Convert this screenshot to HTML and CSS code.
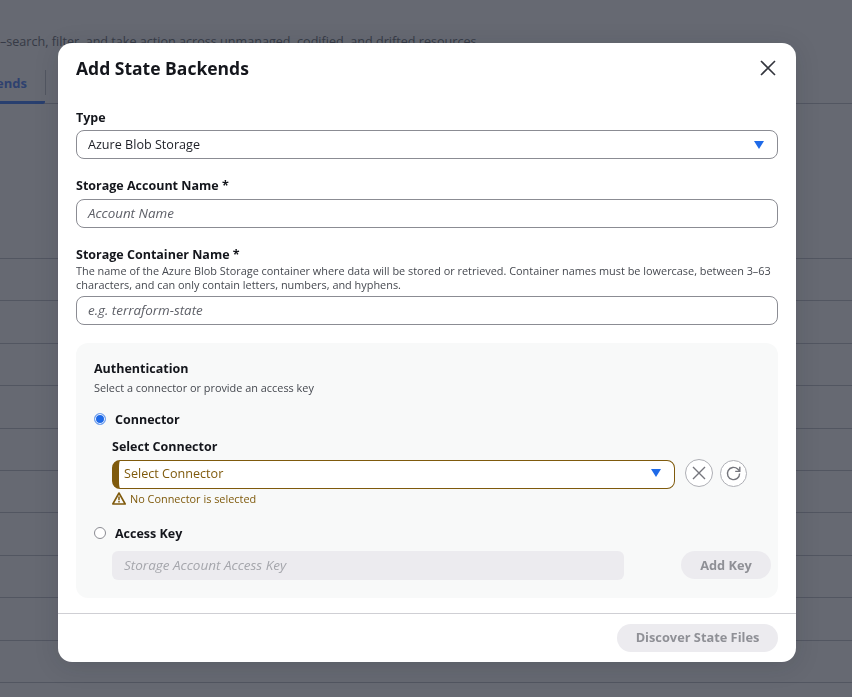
FILE: index.html
```html
<!DOCTYPE html>
<html lang="en">
<head>
    <meta charset="UTF-8">
    <title>Add State Backends</title>
    <link rel="stylesheet" href="styles.css">
</head>
<body>
    <!-- Page behind the dialog -->
    <div class="page">
        <p class="page-intro">–search, filter, and take action across unmanaged, codified, and drifted resources.</p>
        <div class="tabs">
            <span class="tab">ends</span>
            <span class="tab-sep"></span>
        </div>
        <div class="rows">
            <div class="row first"></div>
            <div class="row"></div>
            <div class="row"></div>
            <div class="row"></div>
            <div class="row"></div>
            <div class="row"></div>
            <div class="row"></div>
            <div class="row"></div>
            <div class="row"></div>
            <div class="row"></div>
            <div class="row"></div>
        </div>
    </div>

    <div class="overlay"></div>

    <div class="modal">
        <div class="modal-head">
            <h1>Add State Backends</h1>
            <svg class="close" width="16" height="16" viewBox="0 0 16 16"><path d="M1 1l14 14M15 1L1 15" stroke="#33353d" stroke-width="1.6" fill="none"/></svg>
        </div>

        <div class="modal-body">
            <div class="field">
                <label>Type</label>
                <div class="input select">
                    <span>Azure Blob Storage</span>
                    <span class="caret"></span>
                </div>
            </div>

            <div class="field account">
                <label>Storage Account Name *</label>
                <div class="input placeholder">Account Name</div>
            </div>

            <div class="field">
                <label>Storage Container Name *</label>
                <p class="help">The name of the Azure Blob Storage container where data will be stored or retrieved. Container names must be lowercase, between 3–63 characters, and can only contain letters, numbers, and hyphens.</p>
                <div class="input placeholder">e.g. terraform-state</div>
            </div>

            <!-- Authentication block -->
            <div class="auth">
                <h2>Authentication</h2>
                <p class="auth-sub">Select a connector or provide an access key</p>

                <div class="radio-row">
                    <span class="radio checked"></span>
                    <span class="radio-label">Connector</span>
                </div>
                <div class="indent">
                    <label class="connector-label">Select Connector</label>
                    <div class="connector-row">
                        <div class="input select warn">
                            <span>Select Connector</span>
                            <span class="caret"></span>
                        </div>
                        <span class="round-btn">
                            <svg width="16" height="16" viewBox="0 0 16 16"><path d="M2 2l12 12M14 2L2 14" stroke="#74757c" stroke-width="1.4" fill="none"/></svg>
                        </span>
                        <span class="round-btn refresh">
                            <svg width="17" height="17" viewBox="0 0 17 17"><path d="M14.6 8.5a6.1 6.1 0 1 1-1.9-4.4L14.6 6" stroke="#74757c" stroke-width="1.4" fill="none"/><path d="M14.8 1.8V6.4H10.2" stroke="#74757c" stroke-width="1.4" fill="none"/></svg>
                        </span>
                    </div>
                    <div class="warn-text">
                        <svg width="14" height="13" viewBox="0 0 14 13"><path d="M7 1L13.2 12H.8z" stroke="#7f5a0c" stroke-width="1.6" stroke-linejoin="round" fill="none"/><path d="M7 4.6v3.6M7 9v1.4" stroke="#7f5a0c" stroke-width="1.5" fill="none"/></svg>
                        <span>No Connector is selected</span>
                    </div>
                </div>

                <div class="radio-row second">
                    <span class="radio"></span>
                    <span class="radio-label">Access Key</span>
                </div>
                <div class="indent key-row">
                    <div class="input disabled">Storage Account Access Key</div>
                    <button class="btn add-key">Add Key</button>
                </div>
            </div>
        </div>

        <div class="modal-foot">
            <button class="btn discover">Discover State Files</button>
        </div>
    </div>
</body>
</html>
```

FILE: styles.css
```css
/* Page behind the dialog */
* {
    box-sizing: border-box;
}
html, body {
    height: 100%;
}
body {
    margin: 0;
    font-family: "Open Sans", "Noto Sans", sans-serif;
    color: #14161c;
    background: #fff;
    overflow: hidden;
}
.page-intro {
    margin: 0;
    padding-top: 33px;
    height: 62px;
    font-size: 12.6px;
    line-height: 18px;
    white-space: nowrap;
    color: #777a80;
}
.tabs {
    display: flex;
    align-items: center;
    height: 42px;
    border-bottom: 1px solid #c6c8cf;
}
.tab {
    display: flex;
    justify-content: flex-end;
    font-size: 13px;
    font-weight: 700;
    color: #5f8df5;
    width: 45px;
    height: 42px;
    padding-right: 18px;
    line-height: 42px;
    border-bottom: 3px solid #4f86f5;
    border-radius: 0 0 2px 0;
    white-space: nowrap;
}
.tab-sep {
    width: 1px;
    height: 25px;
    background: #c6c8cf;
}
.rows {
    padding-top: 154px;
}
.row {
    height: 42.4px;
    border-bottom: 1px solid #c6c8cf;
}
.row.first {
    height: 1px;
}

.overlay {
    position: fixed;
    inset: 0;
    background: rgba(20, 24, 38, 0.65);
}

/* Dialog */
.modal {
    position: fixed;
    left: 58px;
    top: 43px;
    width: 738px;
    height: 619px;
    display: flex;
    flex-direction: column;
    background: #fff;
    border-radius: 14px;
    box-shadow: 0 4px 24px rgba(20, 24, 35, 0.15);
}
.modal-head {
    display: flex;
    align-items: center;
    justify-content: space-between;
    height: 50px;
    padding: 0 20px 1px 18px;
}
.modal-head h1 {
    margin: 0;
    font-size: 17.5px;
    line-height: 24px;
    font-weight: 700;
}
.modal-body {
    flex: 1;
    padding: 16px 18px 0;
    border-bottom: 1px solid #cfcfd4;
}
.field {
    margin-bottom: 18px;
}
label {
    display: block;
    font-size: 12.5px;
    line-height: 17px;
    font-weight: 700;
    margin-bottom: 4px;
}
.account label {
    margin-bottom: 5px;
}
.help {
    margin: -3px 0 4px;
    font-size: 10.9px;
    line-height: 14px;
    color: #45484f;
}
.input {
    height: 29px;
    display: flex;
    align-items: center;
    padding: 0 11px;
    font-size: 12.6px;
    background: #fff;
    border: 1px solid #8b8c93;
    border-radius: 8px;
    color: #1d1f26;
}
.placeholder {
    padding-bottom: 2px;
    font-size: 13.4px;
    font-style: italic;
    color: #5e6068;
}
.select {
    justify-content: space-between;
    padding-right: 13px;
}
.caret {
    width: 0;
    height: 0;
    border-left: 5px solid transparent;
    border-right: 5px solid transparent;
    border-top: 8px solid #1f6ae8;
}

/* Authentication block */
.auth {
    height: 255px;
    margin-top: 18px;
    padding: 17px 7px 0 18px;
    background: #f8f9f9;
    border-radius: 12px;
}
.auth h2 {
    margin: 0;
    font-size: 12.5px;
    line-height: 18px;
    font-weight: 700;
}
.auth-sub {
    margin: 2px 0 0;
    font-size: 10.9px;
    line-height: 16px;
    color: #45484f;
}
.radio-row {
    display: flex;
    align-items: center;
    gap: 9px;
    height: 18px;
    margin-top: 14px;
}
.radio-row.second {
    margin-top: 19px;
}
.radio {
    width: 12px;
    height: 12px;
    border: 1px solid #8b8c93;
    border-radius: 50%;
    background: #fff;
}
.radio.checked {
    border-color: #7aa6ee;
    background: #1f6ae8;
    box-shadow: inset 0 0 0 1px #fff;
}
.radio-label {
    font-size: 12.5px;
    font-weight: 700;
}
.indent {
    margin-left: 18px;
}
.connector-label {
    margin: 10px 0 4px;
}
.connector-row {
    display: flex;
    align-items: center;
}
.warn {
    width: 563px;
    padding-bottom: 2px;
    border-color: #7f5a0c;
    border-left: 7px solid #7f5a0c;
    padding-left: 5px;
    color: #7f5a0c;
    margin-right: 10px;
}
.round-btn {
    flex: none;
    width: 28px;
    height: 28px;
    margin-bottom: 2px;
    display: flex;
    align-items: center;
    justify-content: center;
    border: 1px solid #aeafb5;
    border-radius: 50%;
    background: #fff;
}
.round-btn.refresh {
    margin-left: 7px;
    width: 27px;
    height: 27px;
}
.warn-text {
    display: flex;
    align-items: center;
    gap: 4px;
    height: 14px;
    margin-top: 2px;
    font-size: 10.9px;
    color: #7f5a0c;
}
.key-row {
    display: flex;
    align-items: flex-start;
    margin-top: 9px;
}
.disabled {
    width: 512px;
    padding-left: 12px;
    padding-bottom: 2px;
    border: none;
    border-radius: 6px;
    font-size: 13.5px;
    background: #ecebef;
    color: #a5a6ac;
    font-style: italic;
}
.btn {
    border: none;
    border-radius: 14px;
    height: 28px;
    padding: 0;
    font-family: inherit;
    font-size: 12.8px;
    font-weight: 700;
    background: #ecebef;
    color: #8f9096;
}
.add-key {
    width: 90px;
    margin-left: 57px;
}
.modal-foot {
    display: flex;
    justify-content: flex-end;
    height: 48px;
    padding: 10px 18px 0;
}
.discover {
    width: 161px;
    padding-bottom: 2px;
}
```
